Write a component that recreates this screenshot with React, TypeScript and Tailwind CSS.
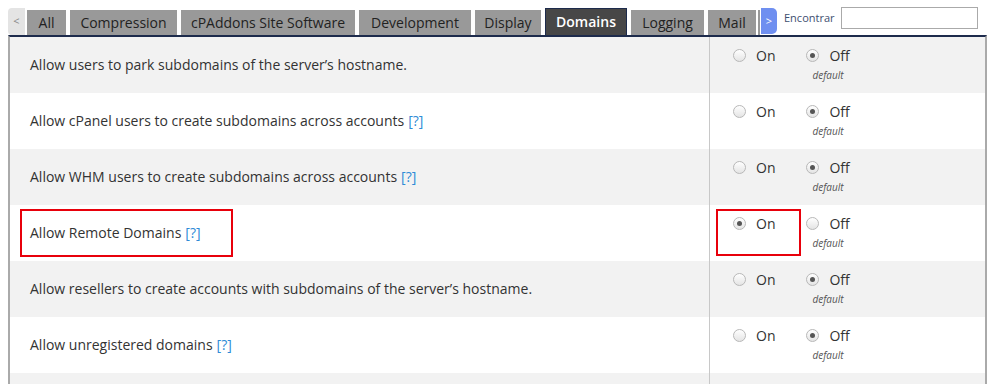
import React from "react";

type Row = {
  label: string;
  help?: boolean;
  on?: boolean;
  marked?: boolean;
};

const TABS = [
  { name: "All", w: "w-[39px]" },
  { name: "Compression", w: "w-[107px]" },
  { name: "cPAddons Site Software", w: "w-[174px]" },
  { name: "Development", w: "w-[112px]" },
  { name: "Display", w: "w-[66px]" },
  { name: "Domains", w: "w-[82px]", active: true },
  { name: "Logging", w: "w-[73px]" },
  { name: "Mail", w: "w-[48px]" },
];

const ROWS: Row[] = [
  { label: "Allow users to park subdomains of the server\u2019s hostname." },
  { label: "Allow cPanel users to create subdomains across accounts", help: true },
  { label: "Allow WHM users to create subdomains across accounts", help: true },
  { label: "Allow Remote Domains", help: true, on: true, marked: true },
  { label: "Allow resellers to create accounts with subdomains of the server\u2019s hostname." },
  { label: "Allow unregistered domains", help: true },
  { label: "" },
];

function Radio({ checked }: { checked?: boolean }) {
  return (
    <span className="w-[13px] h-[13px] rounded-full border border-[#b8b8b8] bg-gradient-to-b from-white to-[#e4e4e4] flex items-center justify-center shrink-0">
      {checked && <span className="w-[5px] h-[5px] rounded-full bg-[#555]" />}
    </span>
  );
}

function SettingRow({ row, i }: { row: Row; i: number }) {
  const bg = i % 2 === 0 ? "bg-[#f2f2f2]" : "bg-white";
  return (
    <div className={`relative flex h-[56px] ${bg}`}>
      <div className="w-[699px] flex items-center pl-[20px] pb-[2px] text-[14px] text-[#333]">
        {row.label}
        {row.help && <span className="ml-[4px] text-[#2f8bd6]">[?]</span>}
      </div>
      <div className="relative flex-1 border-l border-[#c8c8c8] pl-[23px] pt-[10px]">
        {row.label && (
          <div className="flex items-start text-[14px] text-[#333]">
            <label className="flex items-center gap-[10px] h-[17px]">
              <Radio checked={row.on} />
              <span>On</span>
            </label>
            <div className="ml-[31px] flex flex-col items-start">
              <label className="flex items-center gap-[10px] h-[17px]">
                <Radio checked={!row.on} />
                <span>Off</span>
              </label>
              <span className="ml-[6px] mt-[4px] text-[10px] italic text-[#555]">default</span>
            </div>
          </div>
        )}
        {row.marked && (
          <div className="absolute left-[6px] top-[4px] w-[85px] h-[47px] border-2 border-[#e8000b]" />
        )}
      </div>
      {row.marked && (
        <div className="absolute left-[10px] top-[4px] w-[213px] h-[48px] border-2 border-[#e8000b]" />
      )}
    </div>
  );
}

export default function App() {
  return (
    <div className="w-[991px] h-[384px] overflow-hidden bg-white font-['Open_Sans',sans-serif]">
      <div className="flex items-end h-[35px] pl-[8px]">
        <div className="w-[17px] h-[27px] rounded-l-[4px] bg-[#e4e4e4] text-[#888] text-[11px] flex items-center justify-center">
          &lt;
        </div>
        <div className="flex items-end gap-[4px] ml-[2px]">
          {TABS.map((t) =>
            t.active ? (
              <div
                key={t.name}
                className={`${t.w} h-[27px] pb-[1px] bg-[#474747] border border-[#1d2b4c] border-b-0 text-white font-semibold text-[14px] flex items-center justify-center`}
              >
                {t.name}
              </div>
            ) : (
              <div
                key={t.name}
                className={`${t.w} h-[25px] pb-[1px] bg-[#999] text-[#222] text-[14px] flex items-center justify-center`}
              >
                {t.name}
              </div>
            )
          )}
        </div>
        <div className="ml-[2px] w-[2px] h-[25px] bg-[#999]" />
        <div className="ml-[1px] w-[16px] h-[26px] mb-[1px] rounded-r-[5px] bg-[#6f8ff0] text-white text-[11px] flex items-center justify-center self-end">
          &gt;
        </div>
        <div className="self-start mt-[7px] ml-[7px] flex items-center">
          <span className="text-[11px] text-[#3e4f70]">Encontrar</span>
          <input className="ml-[6px] w-[137px] h-[22px] border border-[#aaa] bg-white outline-none" />
        </div>
      </div>
      <div className="ml-[8px] w-[979px] border-t-2 border-t-[#1d2b4c] border-x-2 border-x-[#aaa]">
        {ROWS.map((r, i) => (
          <SettingRow key={i} row={r} i={i} />
        ))}
      </div>
    </div>
  );
}
